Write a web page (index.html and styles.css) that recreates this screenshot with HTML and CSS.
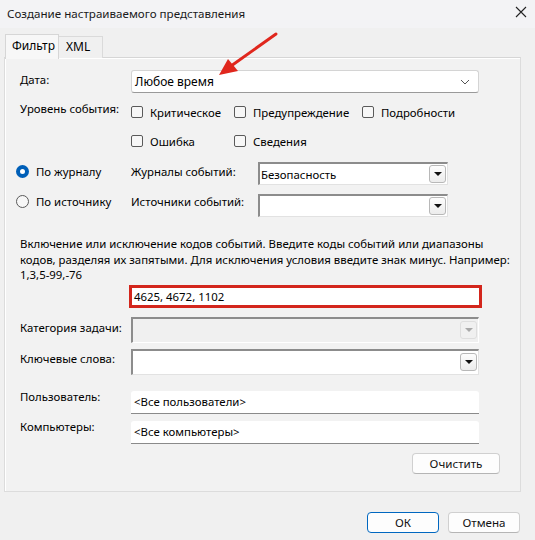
FILE: index.html
```html
<!DOCTYPE html>
<html lang="ru">
<head>
<meta charset="utf-8">
<link rel="stylesheet" href="styles.css">
</head>
<body>
<div class="window">
  <div class="titlebar">
    <span class="title">Создание настраиваемого представления</span>
    <svg class="close" width="12" height="12" viewBox="0 0 12 12"><path d="M1 1L11 11M11 1L1 11" stroke="#222" stroke-width="1.1" fill="none"/></svg>
  </div>
  <div class="tabs">
    <div class="tab active">Фильтр</div>
    <div class="tab">XML</div>
  </div>
  <div class="panel">
    <div class="row date-row">
      <span class="label">Дата:</span>
      <div class="select w11">
        <span>Любое время</span>
        <svg class="chev" width="10" height="6" viewBox="0 0 10 6"><path d="M1 1L5 5L9 1" stroke="#555" stroke-width="1" fill="none"/></svg>
      </div>
    </div>
    <div class="row level-row">
      <span class="label">Уровень события:</span>
      <div class="checks">
        <label class="check c1"><span class="box"></span>Критическое</label>
        <label class="check c2"><span class="box"></span>Предупреждение</label>
        <label class="check"><span class="box"></span>Подробности</label>
      </div>
    </div>
    <div class="row level-row2">
      <span class="label"></span>
      <div class="checks">
        <label class="check c1"><span class="box"></span>Ошибка</label>
        <label class="check c2"><span class="box"></span>Сведения</label>
      </div>
    </div>
    <div class="row radio-row r1">
      <label class="radio"><span class="dot on"></span>По журналу</label>
      <span class="sublabel">Журналы событий:</span>
      <div class="combo"><span>Безопасность</span><span class="ddbtn"><i></i></span></div>
    </div>
    <div class="row radio-row r2">
      <label class="radio"><span class="dot"></span>По источнику</label>
      <span class="sublabel">Источники событий:</span>
      <div class="combo"><span></span><span class="ddbtn"><i></i></span></div>
    </div>
    <p class="hint">Включение или исключение кодов событий. Введите коды событий или диапазоны<br>кодов, разделяя их запятыми. Для исключения условия введите знак минус. Например:<br>1,3,5-99,-76</p>
    <div class="row ids-row">
      <div class="ids">4625, 4672, 1102</div>
    </div>
    <div class="row cat-row">
      <span class="label">Категория задачи:</span>
      <div class="combo wide disabled"><span></span><span class="ddbtn dis"><i></i></span></div>
    </div>
    <div class="row kw-row">
      <span class="label">Ключевые слова:</span>
      <div class="combo wide"><span></span><span class="ddbtn"><i></i></span></div>
    </div>
    <div class="row user-row">
      <span class="label">Пользователь:</span>
      <div class="field">&lt;Все пользователи&gt;</div>
    </div>
    <div class="row comp-row">
      <span class="label">Компьютеры:</span>
      <div class="field">&lt;Все компьютеры&gt;</div>
    </div>
    <div class="clear-wrap"><button class="btn clear">Очистить</button></div>
  </div>
  <div class="footer">
    <button class="btn ok">ОК</button>
    <button class="btn cancel">Отмена</button>
  </div>
  <svg class="arrow" width="70" height="50" viewBox="0 0 70 50">
    <path d="M65 2L20 34" stroke="#e0271d" stroke-width="3" fill="none" stroke-linecap="round"/>
    <path d="M8 43L17 27L27 39Z" fill="#e0271d"/>
  </svg>
</div>
</body>
</html>
```

FILE: styles.css
```css
* { box-sizing: border-box; }
html, body { margin: 0; padding: 0; }
body {
  background: #f0f0f0;
  font-family: "Noto Sans", "Open Sans", sans-serif;
  font-size: 11.4px;
  color: #000;
  width: 535px;
  height: 540px;
  overflow: hidden;
}
.window { position: relative; width: 535px; height: 540px; }
.titlebar {
  height: 28px;
  background: #f3f3f5;
  display: flex;
  align-items: center;
  justify-content: space-between;
  padding: 0 8px 0 7px;
}
.title { font-size: 11.6px; color: #1a1a1a; margin-top: -2px; }
.close { margin-top: -4px; }
.tabs {
  display: flex;
  align-items: flex-end;
  padding-left: 5px;
  height: 30px;
}
.tab {
  height: 22px;
  padding: 0 7px;
  border: 1px solid #dadada;
  border-bottom: none;
  background: #f0f0f0;
  line-height: 20px;
  font-size: 12px;
}
.tab.active {
  height: 25px;
  background: #f7f7f7;
  border-color: #d6d6d6;
  padding: 0 6px;
  line-height: 22px;
  position: relative;
  margin-bottom: -1px;
  z-index: 1;
  width: 54px;
}
.tab:not(.active) { width: 44px; border-left: none; }
.panel {
  margin: -1px 14px 0 4px;
  border: 1px solid #dcdcdc;
  border-top-color: #d6d6d6;
  background: #f2f2f2;
  box-shadow: inset 1px 1px 0 #fff;
  padding: 12px 0 17px 15px;
  height: 435px;
}
.row { display: flex; align-items: center; }
.label { width: 111px; flex: none; }
.date-row { height: 23px; }
.date-row .label { margin-top: -5px; }
.select.w11 {
  width: 348px;
  height: 23px;
  background: #fff;
  border: 1px solid #d4d4d4;
  border-bottom-color: #9a9a9a;
  border-radius: 3px;
  display: flex;
  align-items: center;
  justify-content: space-between;
  padding: 0 8px 0 3px;
  font-size: 12px;
}
.level-row { height: 20px; margin-top: 9px; align-items: center; }
.level-row2 { height: 20px; margin-top: 9px; }
.level-row .label { align-self: flex-start; margin-top: -1px; }
.checks { display: flex; }
.check { display: flex; align-items: center; }
.check.c1 { width: 103px; }
.check.c2 { width: 128px; }
.box {
  width: 12px;
  height: 12px;
  border: 1px solid #5a5a5a;
  border-radius: 2px;
  background: #f7f7f7;
  margin-right: 7px;
}
.radio-row { height: 23px; margin-left: -4px; }
.radio-row.r1 { margin-top: 11px; }
.radio-row.r2 { margin-top: 9px; }
.r1 .radio, .r1 .sublabel { margin-top: -5px; }
.r2 .radio, .r2 .sublabel { margin-top: -8px; }
.radio { width: 115px; display: flex; align-items: center; }
.dot {
  width: 13px;
  height: 13px;
  border-radius: 50%;
  border: 1px solid #5a5a5a;
  margin-right: 7px;
  background: #f7f7f7;
  flex: none;
}
.dot.on {
  border: 4px solid #005fb8;
  background: #fff;
}
.sublabel { width: 127px; }
.combo {
  width: 190px;
  height: 23px;
  background: #fff;
  border-top: 2px solid #8c8c8c;
  border-left: 2px solid #8c8c8c;
  border-right: 1px solid #e2e2e2;
  border-bottom: 1px solid #e2e2e2;
  display: flex;
  align-items: center;
  justify-content: space-between;
  padding: 0 1px 0 1px;
}
.combo.wide { width: 348px; height: 26px; }
.combo.disabled { background: #f0f0f0; border-right-color: #fff; border-bottom-color: #fff; }
.ddbtn {
  width: 17px;
  height: 18px;
  border: 1px solid #b8b8b8;
  border-radius: 3px;
  background: linear-gradient(#fdfdfd, #ececec);
  display: flex;
  align-items: center;
  justify-content: center;
}
.ddbtn i {
  width: 0; height: 0;
  border-left: 4px solid transparent;
  border-right: 4px solid transparent;
  border-top: 4px solid #111;
}
.ddbtn.dis { border-color: #dedede; background: #f0f0f0; }
.ddbtn.dis i { border-top-color: #a8a8a8; }
.hint {
  margin: 19px 0 0 0;
  line-height: 15.5px;
  white-space: nowrap;
}
.ids-row { margin-top: 2px; padding-left: 109px; }
.ids {
  width: 353px;
  height: 23px;
  border: 3px solid #d3261c;
  background: #fff;
  line-height: 17px;
  padding-left: 2px;
}
.cat-row { margin-top: 9px; }
.cat-row .label { margin-top: -4px; }
.kw-row .label { margin-top: -7px; }
.kw-row { margin-top: 6px; }
.user-row { margin-top: 16px; }
.comp-row { margin-top: 7px; }
.user-row .label, .comp-row .label { align-self: flex-start; margin-top: -2px; }
.field {
  width: 348px;
  height: 23px;
  background: #fff;
  border-bottom: 1px solid #8a8a8a;
  border-radius: 3px 3px 0 0;
  padding-left: 3px;
  line-height: 22px;
}
.clear-wrap { display: flex; justify-content: flex-end; padding-right: 20px; margin-top: 9px; }
.btn {
  font-family: inherit;
  font-size: 11.6px;
  color: #111;
  background: #fdfdfd;
  border: 1px solid #d0d0d0;
  border-bottom-color: #b5b5b5;
  border-radius: 4px;
  height: 21px;
  padding: 0;
}
.clear { width: 88px; }
.footer {
  display: flex;
  justify-content: flex-end;
  gap: 9px;
  padding: 0 15px 0 0;
  margin-top: 20px;
}
.ok { width: 72px; border: 1px solid #0067c0; }
.cancel { width: 72px; }
.arrow { position: absolute; left: 211px; top: 32px; }
```
